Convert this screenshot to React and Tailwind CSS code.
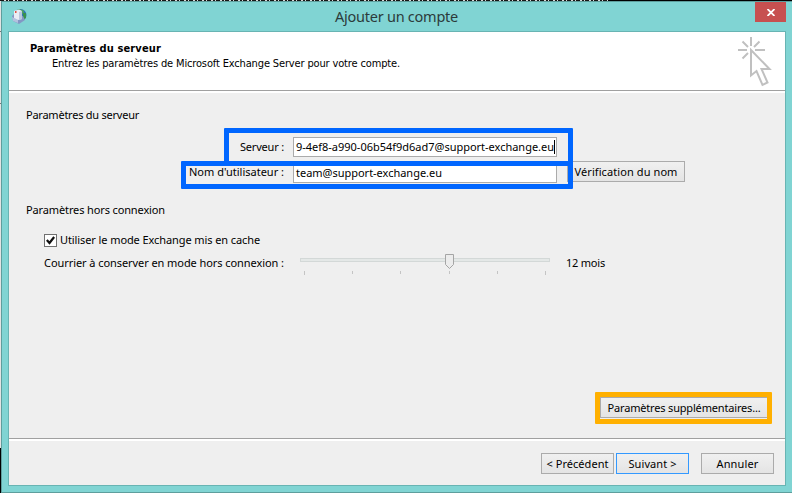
import { useLayoutEffect, useRef } from "react";

// Text that spreads its letters evenly over a given width.
function Label({ width, className = "", children }) {
  const ref = useRef(null);
  useLayoutEffect(() => {
    const el = ref.current;
    el.style.letterSpacing = "0px";
    const natural = el.getBoundingClientRect().width;
    el.style.letterSpacing = `${(width - natural) / children.length}px`;
  }, [width, children]);
  return (
    <span ref={ref} className={`inline-block shrink-0 whitespace-pre ${className}`}>
      {children}
    </span>
  );
}

function Button({ className = "", width, children }) {
  return (
    <button
      className={`flex shrink-0 items-center justify-center border bg-linear-to-b from-[#f0f0f0] to-[#e4e4e4] ${className}`}
    >
      <Label width={width}>{children}</Label>
    </button>
  );
}

function AppIcon() {
  return (
    <svg className="h-4 w-4" viewBox="0 0 16 16">
      <circle cx="9.5" cy="7" r="6" fill="#2d74b8" />
      <path d="M6 2 Q9 0 13 3 L12 6 L9 4Z" fill="#4fa45c" />
      <path d="M12 5 L15 5 L15 10 L12 12Z" fill="#39914e" />
      <path d="M1 8 L3 6 L12 8 L14 12 L8 16 L2 13Z" fill="#8397c4" />
      <path d="M1 9 L7 12 L7 15 L2 13Z" fill="#b3c2df" />
      <path d="M3 3 L8 1.5 L11 3 L11 11 L7 12 L3 10Z" fill="#e9edf5" />
      <path d="M8 4 L11 3 L11 11 L8 12Z" fill="#bac8de" />
      <rect x="4" y="3" width="1.5" height="2" fill="#dd5548" />
    </svg>
  );
}

function ClickIcon() {
  return (
    <svg className="h-[50px] w-[34px]" viewBox="0 0 34 50" fill="none" stroke="#c0c0c0" strokeWidth="2">
      <path d="M13 0V9M0 13H9M17 13H27M4.500 4.500L10 10M21.500 4.500L16 10M4.500 21.500L10 16" />
      <path d="M13 13V38.500L18.500 34L24.500 48L29.500 45.500L23.500 32H31.500Z" />
    </svg>
  );
}

function Divider() {
  return <div className="h-[3px] shrink-0 border-t border-[#a0a0a0] bg-white" />;
}

const ticks = [4, 52, 100, 149, 197, 245];

function Slider() {
  return (
    <svg className="h-6 w-[251px]" viewBox="0 0 251 24">
      <rect x="0.5" y="6.500" width="249" height="3" fill="#e4e8e7" stroke="#d3d8d7" />
      {ticks.map((x, i) => (
        <rect key={x} x={x} y="19" width="1" height={i === 0 || i === 5 ? 4 : 3} fill="#c4c4c4" />
      ))}
      <path d="M145.500 2.500H153.500V12.500L149.500 16.500L145.500 12.500Z" fill="#ececec" stroke="#a5a5a5" />
    </svg>
  );
}

export default function App() {
  return (
    <div className="relative flex h-[493px] w-[792px] flex-col overflow-hidden bg-[#dedede] font-['Noto_Sans',sans-serif] text-[11px] leading-[14px] text-black">
      <div className="flex h-px shrink-0">
        <div className="w-[608px] bg-[repeating-linear-gradient(90deg,#161616_0_4px,#d8d8d8_4px_6px,#161616_6px_8px,#d8d8d8_8px_9px)]" />
        <div className="flex-1 bg-black" />
      </div>
      <div className="flex min-h-0 flex-1">
        <div className="flex w-px shrink-0 flex-col">
          <div className="h-[30px] bg-[#e3e3e3]" />
          <div className="h-px bg-[#777]" />
          <div className="h-[71px] bg-[#e3e3e3]" />
          <div className="h-px bg-[#777]" />
          <div className="h-[344px] bg-[#e3e3e3]" />
          <div className="flex-1 bg-black" />
        </div>
        <div className="flex w-[791px] flex-col border-y border-l border-[#5e9e9d] bg-[#80d4d3] pb-[6px] pl-[6px] pr-[6px]">
          <header className="flex h-[29px] shrink-0 justify-between">
            <div className="flex w-8 pl-[3px] pt-[6px]"><AppIcon /></div>
            <h1 className="pr-[2px] pt-1 text-[14.500px] leading-5 text-[#2c3b3b]">
              <Label width={123}>Ajouter un compte</Label>
            </h1>
            <button className="flex h-5 w-[31px] items-center justify-center bg-[#c75050]">
              <svg className="h-[7px] w-2" viewBox="0 0 8 7" stroke="white" strokeWidth="1.800">
                <path d="M0.500 0L7.500 7M7.500 0L0.500 7" />
              </svg>
            </button>
          </header>
          <main className="flex min-h-0 flex-1 flex-col border border-[#68b4b3] bg-[#efefef]">
            <section className="flex h-[58px] shrink-0 justify-between bg-white pl-[21px] pr-[13px] font-['DejaVu_Sans_Condensed','DejaVu_Sans',sans-serif]">
              <div className="flex flex-col items-start pt-[10px]">
                <Label width={131} className="font-bold">Paramètres du serveur</Label>
                <Label width={348} className="ml-[22px] mt-px">Entrez les paramètres de Microsoft Exchange Server pour votre compte.</Label>
              </div>
              <div className="pt-[5px]"><ClickIcon /></div>
            </section>
            <Divider />
            <section className="flex h-[345px] shrink-0 flex-col">
              <div className="pl-[17px] pt-[15px]"><Label width={113}>Paramètres du serveur</Label></div>
              <div className="mt-[15px] flex h-[20px] items-center">
                <div className="flex w-[284px] justify-end pr-[9px]"><Label width={44}>Serveur :</Label></div>
                <div className="flex h-5 w-[264px] items-center border border-[#ababab] bg-white pl-[2px]">
                  <Label width={258}>9-4ef8-a990-06b54f9d6ad7@support-exchange.eu</Label>
                  <span className="h-[14px] w-px bg-black" />
                </div>
              </div>
              <div className="mt-1 flex h-[22px]">
                <div className="flex w-[284px] justify-end pr-[9px] pt-[4px]"><Label width={95}>Nom d'utilisateur :</Label></div>
                <div className="mt-[2px] flex h-5 w-[264px] items-center border border-[#ababab] bg-white pl-[2px]">
                  <Label width={146}>team@support-exchange.eu</Label>
                </div>
                <Button width={103} className="ml-[10px] h-[21px] w-[118px] border-[#ababab]">Vérification du nom</Button>
              </div>
              <div className="pl-[17px] pt-[20px]"><Label width={139}>Paramètres hors connexion</Label></div>
              <div className="mt-4 flex h-[14px] items-center pl-[35px]">
                <div className="flex h-[13px] w-[13px] items-center justify-center border border-[#707070] bg-white">
                  <svg className="h-[9px] w-[9px]" viewBox="0 0 9 9" fill="none" stroke="#101010" strokeWidth="2.300">
                    <path d="M0.800 4L3.500 7L8.200 1" />
                  </svg>
                </div>
                <Label width={200} className="ml-[3px]">Utiliser le mode Exchange mis en cache</Label>
              </div>
              <div className="mt-[5px] flex h-6 pl-[35px]">
                <div className="w-[256px] pt-1"><Label width={240}>Courrier à conserver en mode hors connexion :</Label></div>
                <Slider />
                <Label width={39} className="ml-[15px] mt-1">12 mois</Label>
              </div>
              <div className="mt-[121px] flex justify-end pr-[17px]">
                <Button width={153} className="h-[21px] w-[168px] border-[#ababab]">Paramètres supplémentaires...</Button>
              </div>
            </section>
            <Divider />
            <footer className="flex pl-[532px] pt-3">
              <Button width={62} className="h-[21px] w-[73px] border-[#ababab]">{"< Précédent"}</Button>
              <Button width={48} className="ml-[2px] h-[21px] w-[73px] border-[#3399ff]">{"Suivant >"}</Button>
              <Button width={42} className="ml-3 h-[21px] w-[73px] border-[#ababab]">Annuler</Button>
            </footer>
          </main>
        </div>
      </div>
      {/* Coloured frames drawn over the fields */}
      <div className="absolute left-[224px] top-[128px] h-[38px] w-[349px] rounded-[1px] border-[5px] border-[#0066ff]" />
      <div className="absolute left-[181px] top-[161px] h-[28px] w-[392px] rounded-[1px] border-[5px] border-[#0066ff]" />
      <div className="absolute left-[595px] top-[392px] h-[32px] w-[177px] rounded-[1px] border-[5px] border-[#ffb000]" />
    </div>
  );
}
